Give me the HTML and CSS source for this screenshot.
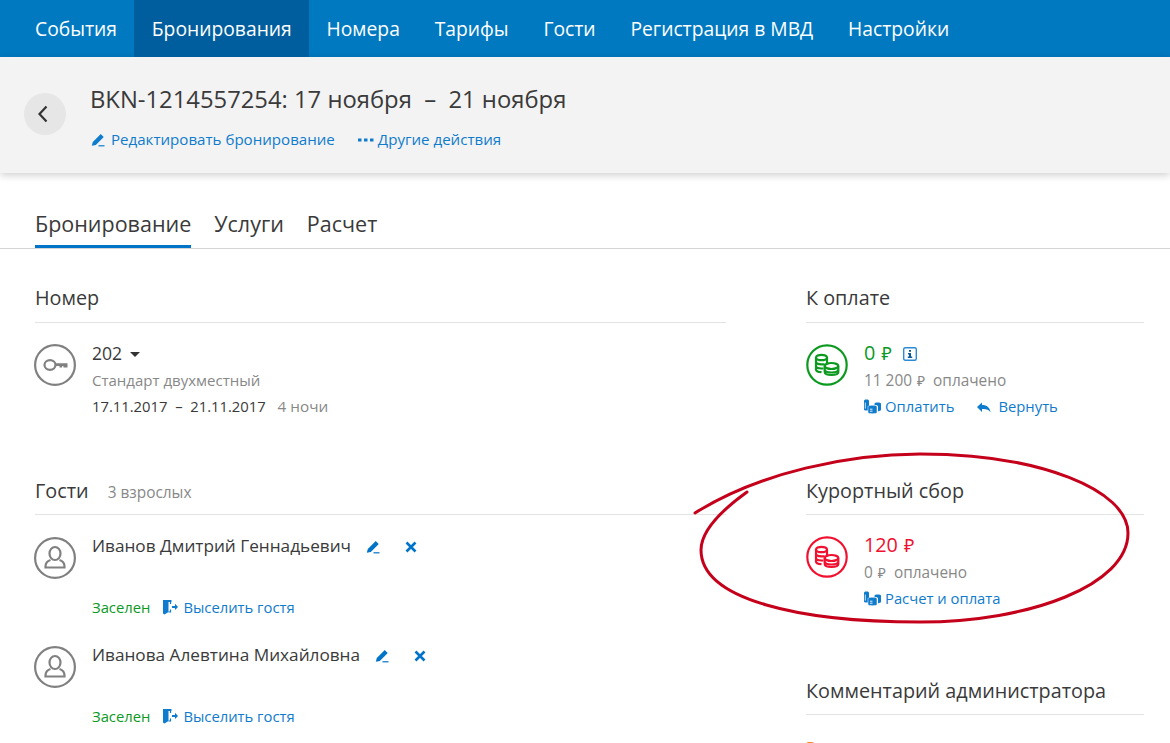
FILE: index.html
```html
<!DOCTYPE html>
<html lang="ru">
<head>
    <meta charset="UTF-8">
    <meta name="viewport" content="width=device-width, initial-scale=1.0">
    <title>Бронирование</title>
    <link rel="stylesheet" href="styles.css">
</head>
<body>

    <svg class="defs" aria-hidden="true">
        <symbol id="i-pencil" viewBox="0 0 14 14">
            <path d="M.8 12.800 1.800 9 8.800 2l.9-.9 3 3-.9.9-7 7z" fill="currentColor"/>
            <path d="M7.500 12.800H13.500" stroke="currentColor" stroke-width="1.200" fill="none"/>
        </symbol>
        <symbol id="i-close" viewBox="0 0 12 12">
            <path d="M1.500 1.500l9 9M10.500 1.500l-9 9" stroke="currentColor" stroke-width="2.600" fill="none"/>
        </symbol>
        <symbol id="i-exit" viewBox="0 0 16 16">
            <path d="M1 1h8.500v2H6.500v10L2.500 15.500 1 14.500z" fill="currentColor"/>
            <path d="M8.500 3v2M8.500 10.500V13H6.500" stroke="currentColor" stroke-width="1.200" fill="none"/>
            <path d="M10 7h3V4.800L16 8l-3 3V9h-3z" fill="currentColor"/>
        </symbol>
        <symbol id="i-pay" viewBox="0 0 17 15">
            <path d="M0 1.500C0 0 5 0 5 1.500V10.500C5 11.800 0 11.800 0 10.500z" fill="currentColor"/>
            <path d="M1.300 3.600v6" stroke="#fff" stroke-width=".8"/>
            <path d="M10.500 4.500C10.500 3 17 3 17 4.500v6.200c0 1.100-1.800 1.400-3 1.500V7.500c0-1.200-1.800-1.600-3.500-1.600z" fill="currentColor"/>
            <path d="M4 7.500c0-1.600 9-1.600 9 0v6c0 1.600-9 1.600-9 0z" fill="currentColor" stroke="#fff" stroke-width=".5"/>
            <path d="M6 10.200h2.500M6 12.200h2.500" stroke="#fff" stroke-width=".9"/>
        </symbol>
        <symbol id="i-coins" viewBox="0 0 42 42">
            <g fill="none" stroke="currentColor" stroke-width="2.200">
                <circle cx="21" cy="21" r="19.700"/>
                <ellipse cx="15.500" cy="13.500" rx="5.500" ry="2.700"/>
                <path d="M10 13.500v12c0 1.500 2.200 2.500 5.500 2.700M21 13.500v5.500M10 17.800c0 1.500 2.500 2.500 5.500 2.500h3M10 22c0 1.500 2.200 2.500 5.500 2.500h2"/>
                <ellipse cx="25.500" cy="22" rx="6.800" ry="3"/>
                <path d="M18.700 22v6c0 1.800 3 3 6.800 3s6.800-1.200 6.800-3v-6M18.700 25.500c0 1.800 3 3 6.800 3s6.800-1.200 6.800-3"/>
            </g>
        </symbol>
    </svg>

    <div class="page">
        <nav class="topnav">
            <a href="#">События</a>
            <a href="#" class="active">Бронирования</a>
            <a href="#">Номера</a>
            <a href="#">Тарифы</a>
            <a href="#">Гости</a>
            <a href="#">Регистрация в МВД</a>
            <a href="#">Настройки</a>
        </nav>

        <header class="booking-head">
            <button class="back" aria-label="Назад">
                <svg width="12" height="18" viewBox="0 0 12 18"><path d="M9.500 1.500 2.500 9l7 7.500" fill="none" stroke="#333" stroke-width="2.200"/></svg>
            </button>
            <div>
                <h1>BKN-1214557254: 17 ноября &nbsp;–&nbsp; 21 ноября</h1>
                <div class="head-links">
                    <a href="#" class="link"><svg class="ico ico-edit" width="14" height="14"><use href="#i-pencil"/></svg>Редактировать бронирование</a>
                    <a href="#" class="link"><svg class="ico ico-dots" width="16" height="4" viewBox="0 0 16 4"><path d="M0 .5h3.500v3H0zM6 .5h3.500v3H6zM12 .5h3.500v3H12z" fill="currentColor"/></svg>Другие действия</a>
                </div>
            </div>
        </header>

        <div class="tabs">
            <a href="#" class="active">Бронирование</a>
            <a href="#">Услуги</a>
            <a href="#">Расчет</a>
        </div>

        <div class="columns">
            <main class="col-left">
                <section class="block block-room">
                    <h2>Номер</h2>
                    <div class="item">
                        <svg class="round" viewBox="0 0 42 42">
                            <circle cx="21" cy="21" r="19.900" fill="none" stroke="#808080" stroke-width="2.200"/>
                            <ellipse cx="16" cy="21" rx="5.500" ry="4.800" fill="none" stroke="#808080" stroke-width="2.200"/>
                            <path d="M21 19.200h12.500v4.300h-4v-1.200h-1.500v1.200h-2.500v-1.500H21z" fill="#808080"/>
                        </svg>
                        <div class="item-body">
                            <div class="room-no">202 <i class="caret"></i></div>
                            <div class="muted line-2">Стандарт двухместный</div>
                            <div class="line-3 dates">17.11.2017 &nbsp;–&nbsp; 21.11.2017 <span class="muted nights">4 ночи</span></div>
                        </div>
                    </div>
                </section>

                <section class="block">
                    <h2>Гости <span class="muted count">3 взрослых</span></h2>

                    <div class="guest">
                        <svg class="round" viewBox="0 0 42 42">
                            <circle cx="21" cy="21" r="19.900" fill="none" stroke="#808080" stroke-width="2.200"/>
                            <ellipse cx="21" cy="16.500" rx="5.500" ry="6.500" fill="none" stroke="#808080" stroke-width="2.200"/>
                            <path d="M16.500 23c-3 1-5 3-5 6.500v1h19v-1c0-3.500-2-5.500-5-6.500" fill="none" stroke="#808080" stroke-width="2.200"/>
                        </svg>
                        <div class="item-body">
                            <div class="guest-name">Иванов Дмитрий Геннадьевич
                                <svg class="act act-edit" width="14" height="14"><use href="#i-pencil"/></svg>
                                <svg class="act act-del" width="12" height="12"><use href="#i-close"/></svg>
                            </div>
                            <div class="guest-status">
                                <span class="ok">Заселен</span>
                                <a href="#" class="link"><svg class="ico" width="16" height="16"><use href="#i-exit"/></svg>Выселить гостя</a>
                            </div>
                        </div>
                    </div>

                    <div class="guest">
                        <svg class="round" viewBox="0 0 42 42">
                            <circle cx="21" cy="21" r="19.900" fill="none" stroke="#808080" stroke-width="2.200"/>
                            <ellipse cx="21" cy="16.500" rx="5.500" ry="6.500" fill="none" stroke="#808080" stroke-width="2.200"/>
                            <path d="M16.500 23c-3 1-5 3-5 6.500v1h19v-1c0-3.500-2-5.500-5-6.500" fill="none" stroke="#808080" stroke-width="2.200"/>
                        </svg>
                        <div class="item-body">
                            <div class="guest-name">Иванова Алевтина Михайловна
                                <svg class="act act-edit" width="14" height="14"><use href="#i-pencil"/></svg>
                                <svg class="act act-del" width="12" height="12"><use href="#i-close"/></svg>
                            </div>
                            <div class="guest-status">
                                <span class="ok">Заселен</span>
                                <a href="#" class="link"><svg class="ico" width="16" height="16"><use href="#i-exit"/></svg>Выселить гостя</a>
                            </div>
                        </div>
                    </div>
                </section>
            </main>

            <aside class="col-right">
                <section class="block block-room">
                    <h2>К оплате</h2>
                    <div class="item">
                        <svg class="round green"><use href="#i-coins"/></svg>
                        <div class="item-body">
                            <div class="amount ok">0 <span class="rub">₽</span>
                                <svg class="info" width="14" height="14" viewBox="0 0 14 14"><rect x=".7" y=".7" width="12.600" height="12.600" rx="1.500" fill="none" stroke="#2a8ad6" stroke-width="1.400"/><path d="M6 3h2v1.700H6zM5 6h3v3.500h1.200V11H4.800V9.500H6V7.500H5z" fill="#0b5a9c"/></svg>
                            </div>
                            <div class="muted line-2 paid">11 200 <span class="rub">₽</span>&nbsp; оплачено</div>
                            <div class="line-3 pay-links">
                                <a href="#" class="link"><svg class="ico ico-pay" width="17" height="15"><use href="#i-pay"/></svg>Оплатить</a>
                                <a href="#" class="link"><svg class="ico ico-back" width="14" height="12" viewBox="0 0 14 12"><path d="M0 5 5 .5V3c5 0 8 2.500 8.500 7.500C12 7.500 9 6.800 5 7v3z" fill="currentColor"/></svg>Вернуть</a>
                            </div>
                        </div>
                    </div>
                </section>

                <section class="block block-tax">
                    <h2>Курортный сбор</h2>
                    <div class="item">
                        <svg class="round red"><use href="#i-coins"/></svg>
                        <div class="item-body">
                            <div class="amount bad">120 <span class="rub">₽</span></div>
                            <div class="muted line-2 paid">0 <span class="rub">₽</span>&nbsp; оплачено</div>
                            <div class="line-3">
                                <a href="#" class="link"><svg class="ico ico-pay" width="17" height="15"><use href="#i-pay"/></svg>Расчет и оплата</a>
                            </div>
                        </div>
                    </div>
                </section>

                <section class="block">
                    <h2>Комментарий администратора</h2>
                    <div class="comment">Внимание</div>
                </section>
            </aside>
        </div>

        <!-- red marker circle drawn over the screenshot -->
        <svg class="scribble" width="1170" height="743" viewBox="0 0 1170 743">
            <path d="M695 513C760 472 850 454 920 454C1040 454 1128 490 1128 533C1128 585 1030 622 920 622C800 622 701 600 701 550C701 530 722 510 747 492" fill="none" stroke="#c4001a" stroke-width="3" stroke-linecap="round"/>
        </svg>
    </div>

</body>
</html>
```

FILE: styles.css
```css
/* base */
* {
    box-sizing: border-box;
}

body {
    margin: 0;
    font-family: "Open Sans", "Noto Sans", sans-serif;
    color: #3a3a3a;
    background: #fff;
}

a {
    text-decoration: none;
}

.defs {
    display: none;
}

.page {
    position: relative;
    width: 1170px;
    height: 743px;
    overflow: hidden;
}

/* top navigation */
.topnav {
    display: flex;
    height: 57px;
    padding-left: 17.6px;
    background: #0079c1;
}

.topnav a {
    display: flex;
    align-items: center;
    padding: 0 17.4px;
    font-size: 19.3px;
    color: #fff;
}

.topnav a.active {
    background: #005e9e;
}

/* booking header */
.booking-head {
    display: flex;
    align-items: flex-start;
    height: 116px;
    padding: 25px 0 0 24px;
    background: #f3f3f3;
    box-shadow: 0 2px 8px rgba(0, 0, 0, 0.2);
}

.back {
    display: flex;
    align-items: center;
    justify-content: center;
    width: 42px;
    height: 42px;
    margin: 11px 24px 0 0;
    padding: 0 4px 0 0;
    border: none;
    border-radius: 50%;
    background: #e6e6e6;
}

h1 {
    margin: 0;
    font-size: 23.8px;
    font-weight: 400;
    line-height: 34px;
}

.head-links {
    display: flex;
    gap: 23px;
    margin-top: 12px;
    line-height: 22px;
}

.link {
    font-size: 14.8px;
    color: #0f7bcc;
}

.head-links .link {
    font-size: 15.1px;
}

.ico {
    margin-right: 5px;
    vertical-align: -2px;
}

.ico-edit {
    margin-left: 1px;
    margin-right: 6px;
}

.ico-dots {
    margin-right: 4px;
    vertical-align: 3px;
}

.ico-pay {
    margin-right: 4px;
}

.ico-back {
    margin-right: 7px;
}

/* tabs */
.tabs {
    display: flex;
    gap: 23px;
    height: 76px;
    padding: 36px 0 0 35px;
    border-bottom: 1px solid #d4d4d4;
}

.tabs a {
    height: 39px;
    font-size: 21.5px;
    line-height: 30px;
    color: #3a3a3a;
}

.tabs a.active {
    border-bottom: 3px solid #0074c8;
}

/* two columns */
.columns {
    display: grid;
    grid-template-columns: 691px 338px;
    gap: 80px;
    padding: 0 0 0 35px;
}

.block-room {
    height: 192px;
}

.block-tax {
    height: 200px;
}

h2 {
    margin: 0;
    height: 74px;
    padding-top: 36px;
    border-bottom: 1px solid #e3e3e3;
    font-size: 19.8px;
    font-weight: 400;
    line-height: 28px;
}

.block-room h2 {
    padding-top: 35px;
}

.count {
    margin-left: 14px;
    font-size: 15.4px;
}

.muted {
    color: #888;
}

.ok {
    color: #0b9a1f;
}

.bad {
    color: #f0102f;
}

/* icon + text rows */
.item,
.guest {
    display: flex;
    gap: 16px;
}

.col-left .item,
.col-left .guest {
    margin-left: -1px;
}

.item {
    padding-top: 21px;
}

.guest {
    height: 109px;
    padding-top: 22px;
}

.round {
    flex: none;
    width: 42px;
    height: 42px;
}

.green {
    color: #0b9a1f;
}

.red {
    color: #f0102f;
}

.item-body {
    font-size: 15px;
    margin-top: -3px;
}

.room-no {
    font-size: 17.6px;
    line-height: 24px;
}

.caret {
    display: inline-block;
    margin-left: 3px;
    border: 5px solid transparent;
    border-top-color: #333;
    border-bottom: none;
    vertical-align: 3px;
}

.line-2 {
    margin-top: 2px;
    line-height: 26px;
}

.line-3 {
    line-height: 26px;
}

.dates {
    font-size: 14.8px;
}

.nights {
    margin-left: 8px;
    font-size: 15.3px;
}

.amount {
    font-size: 19.8px;
    line-height: 24px;
}

.amount + .paid {
    margin-top: 3px;
    font-size: 15.4px;
    line-height: 25px;
}

.rub {
    margin-left: 1px;
    font-size: 0.9em;
}

.info {
    margin-left: 6px;
    vertical-align: -1px;
}

.pay-links {
    display: flex;
    gap: 23px;
}

/* guests */
.guest-name {
    font-size: 17.2px;
    line-height: 24px;
    white-space: nowrap;
}

.act {
    color: #0074c8;
}

.act-edit {
    margin-left: 10px;
    vertical-align: -2px;
}

.act-del {
    margin-left: 21px;
    vertical-align: -1px;
}

.guest-status {
    display: flex;
    gap: 12px;
    margin-top: 38px;
    font-size: 14.8px;
    line-height: 22px;
}

.comment {
    padding-top: 21px;
    font-size: 15px;
    color: #f5871f;
}

/* marker */
.scribble {
    position: absolute;
    top: 0;
    left: 0;
    pointer-events: none;
}
```
